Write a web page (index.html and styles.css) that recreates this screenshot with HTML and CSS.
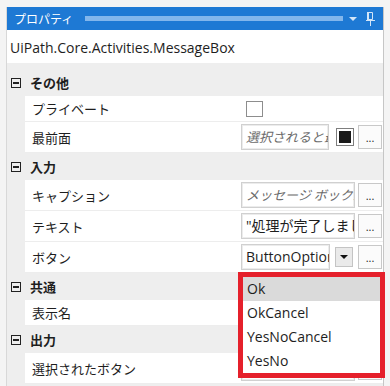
FILE: index.html
```html
<!DOCTYPE html>
<html lang="ja">
<head>
  <meta charset="UTF-8">
  <title>プロパティ</title>
  <link rel="stylesheet" href="styles.css">
</head>
<body>
  <div class="panel">
    <div class="titlebar">
      <span class="title">プロパティ</span>
      <span class="grip"></span>
      <svg class="tb-arrow" width="8" height="4" viewBox="0 0 8 4"><path d="M0 0h8L4 4z" fill="#d3e5f8"/></svg>
      <svg class="tb-pin" width="9" height="14" viewBox="0 0 9 14">
        <path d="M2.5 0.5h4v7h-4z" fill="none" stroke="#d3e5f8"/>
        <path d="M2 0v8" stroke="#d3e5f8" stroke-width="2"/>
        <path d="M0 8.5h9" stroke="#d3e5f8"/>
        <path d="M4.5 9v5" stroke="#d3e5f8"/>
      </svg>
    </div>

    <div class="typename">UiPath.Core.Activities.MessageBox</div>

    <div class="grid">
      <div class="cat"><span class="toggle"></span>その他</div>
      <div class="prop short">
        <div class="name">プライベート</div>
        <div class="value"><span class="check"></span></div>
      </div>
      <div class="prop">
        <div class="name">最前面</div>
        <div class="value">
          <div class="textbox hint">選択されると最前面に表示</div>
          <span class="swatch"><span></span></span>
          <span class="more">...</span>
        </div>
      </div>

      <div class="cat"><span class="toggle"></span>入力</div>
      <div class="prop">
        <div class="name">キャプション</div>
        <div class="value">
          <div class="textbox hint">メッセージ ボックスのタイトル</div>
          <span class="more">...</span>
        </div>
      </div>
      <div class="prop">
        <div class="name">テキスト</div>
        <div class="value">
          <div class="textbox">"処理が完了しました"</div>
          <span class="more">...</span>
        </div>
      </div>
      <div class="prop">
        <div class="name">ボタン</div>
        <div class="value">
          <div class="textbox">ButtonOptions.Ok</div>
          <span class="ddbtn"></span>
          <span class="more">...</span>
          <ul class="dropdown">
            <li class="sel">Ok</li>
            <li>OkCancel</li>
            <li>YesNoCancel</li>
            <li>YesNo</li>
          </ul>
        </div>
      </div>

      <div class="cat"><span class="toggle"></span>共通</div>
      <div class="prop short">
        <div class="name">表示名</div>
        <div class="value"></div>
      </div>

      <div class="cat"><span class="toggle"></span>出力</div>
      <div class="prop">
        <div class="name">選択されたボタン</div>
        <div class="value">
          <div class="textbox"></div>
          <span class="more">...</span>
        </div>
      </div>
    </div>
  </div>
</body>
</html>
```

FILE: styles.css
```css
body { margin: 0; background: #f4f4f4; font-family: "Open Sans", "Noto Sans CJK JP", sans-serif; color: #1e1e1e; }
.panel { margin: 7px 0 0 6px; width: 376px; height: 379px; background: #eeeeee; border-left: 1px solid #d8d8d8; border-right: 1px solid #c6c6c6; }

.titlebar { height: 23px; background: #1e79d4; display: flex; align-items: center; padding: 0 8px 0 7px; }
.title { color: #fff; font-family: "Noto Sans CJK JP", sans-serif; font-size: 12px; line-height: 23px; }
.grip { flex: 1; height: 5px; margin: 0 6px 0 12px; background-image: radial-gradient(circle, #82b6ec 0.9px, transparent 1px); background-size: 2px 2px; }
.tb-arrow { margin-right: 9px; }

.typename { background: #fff; height: 30px; padding: 3px 0 0 3px; font-size: 14px; line-height: 30px; }

.grid { margin-top: 6px; }
.cat { height: 27px; display: flex; align-items: center; padding-left: 4px; font-family: "Noto Sans CJK JP", sans-serif; font-size: 13px; font-weight: bold; }
.toggle { width: 10px; height: 10px; box-sizing: border-box; border: 1px solid #222; margin-right: 9px; position: relative; }
.toggle::after { content: ""; position: absolute; left: 1px; right: 1px; top: 3px; height: 2px; background: #222; }

.prop { height: 30px; margin-left: 18px; background: #fff; border-bottom: 1px solid #ededed; display: flex; }
.prop.short { height: 25px; }
.name { width: 206px; padding-left: 7px; display: flex; align-items: center; font-family: "Noto Sans CJK JP", sans-serif; font-size: 13px; }
.value { flex: 1; min-width: 0; display: flex; align-items: center; padding: 0 1px 0 3px; position: relative; }

.check { width: 15px; height: 14px; border: 1px solid #8d8d8d; margin-left: 5px; }
.textbox { flex: 1; min-width: 0; height: 26px; box-sizing: border-box; border: 1px solid #d0d0d0; box-shadow: inset 0 0 0 1px #ececec; padding: 0 4px; font-size: 14px; line-height: 24px; white-space: nowrap; overflow: hidden; }
.hint { font-style: italic; color: #6b6b6b; font-family: "Noto Sans CJK JP", sans-serif; font-size: 13px; }
.more { width: 24px; height: 24px; box-sizing: border-box; margin-left: 3px; border: 1px solid #c8c8c8; background: #fbfbfb; display: flex; align-items: flex-end; justify-content: center; font-size: 11px; line-height: 14px; padding-bottom: 3px; }
.swatch { width: 18px; height: 18px; box-sizing: border-box; margin: 0 1px 0 7px; border: 1px solid #7e7e7e; padding: 2px; background: #fff; }
.swatch span { display: block; width: 12px; height: 12px; background: #1a1a1a; }
.ddbtn { width: 18px; height: 20px; box-sizing: border-box; margin: 0 2px 0 5px; border: 1px solid #c4c4c4; background: #eaeaea; position: relative; }
.ddbtn::after { content: ""; position: absolute; left: 4px; top: 7px; border-left: 4px solid transparent; border-right: 4px solid transparent; border-top: 4px solid #111; }

.dropdown { position: absolute; top: 30px; left: 0; width: 147px; box-sizing: border-box; margin: 0; padding: 0; list-style: none; background: #fff; border: 5px solid #e5202b; z-index: 2; }
.dropdown li { height: 24px; line-height: 24px; padding-left: 4px; font-size: 14px; }
.dropdown li.sel { background: #dadada; }
```
